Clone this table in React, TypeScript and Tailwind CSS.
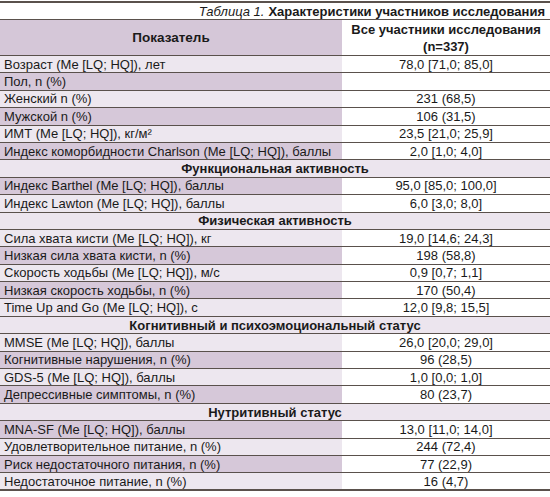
const rows: Array<[string, string] | string> = [
  ["Возраст (Me [LQ; HQ]), лет", "78,0 [71,0; 85,0]"],
  ["Пол, n (%)", ""],
  ["Женский n (%)", "231 (68,5)"],
  ["Мужской n (%)", "106 (31,5)"],
  ["ИМТ (Me [LQ; HQ]), кг/м²", "23,5 [21,0; 25,9]"],
  ["Индекс коморбидности Charlson (Me [LQ; HQ]), баллы", "2,0 [1,0; 4,0]"],
  "Функциональная активность",
  ["Индекс Barthel (Me [LQ; HQ]), баллы", "95,0 [85,0; 100,0]"],
  ["Индекс Lawton (Me [LQ; HQ]), баллы", "6,0 [3,0; 8,0]"],
  "Физическая активность",
  ["Сила хвата кисти (Me [LQ; HQ]), кг", "19,0 [14,6; 24,3]"],
  ["Низкая сила хвата кисти, n (%)", "198 (58,8)"],
  ["Скорость ходьбы (Me [LQ; HQ]), м/с", "0,9 [0,7; 1,1]"],
  ["Низкая скорость ходьбы, n (%)", "170 (50,4)"],
  ["Time Up and Go (Me [LQ; HQ]), с", "12,0 [9,8; 15,5]"],
  "Когнитивный и психоэмоциональный статус",
  ["MMSE (Me [LQ; HQ]), баллы", "26,0 [20,0; 29,0]"],
  ["Когнитивные нарушения, n (%)", "96 (28,5)"],
  ["GDS-5 (Me [LQ; HQ]), баллы", "1,0 [0,0; 1,0]"],
  ["Депрессивные симптомы, n (%)", "80 (23,7)"],
  "Нутритивный статус",
  ["MNA-SF (Me [LQ; HQ]), баллы", "13,0 [11,0; 14,0]"],
  ["Удовлетворительное питание, n (%)", "244 (72,4)"],
  ["Риск недостаточного питания, n (%)", "77 (22,9)"],
  ["Недостаточное питание, n (%)", "16 (4,7)"],
];

export default function App() {
  return (
    <div className="w-[550px] h-[497px] bg-white text-[13px] text-[#1a1a1a] font-['Liberation_Sans',Arial,sans-serif] leading-none">
      <div className="h-[2px] mt-[1px] bg-[#5a514c]" />
      <div className="h-[16px] flex items-center justify-end pr-[5px] text-[13px]">
        <span className="italic">Таблица 1.</span>
        <span className="font-bold ml-[4px]">Характеристики участников исследования</span>
      </div>
      <div className="border-t border-b border-[#5a514c] flex h-[37px]">
        <div className="w-[342px] bg-[#d5c7d8] flex items-center justify-center font-bold text-[13.5px]">Показатель</div>
        <div className="flex-1 flex flex-col items-center justify-center font-bold leading-[17px]">
          <span>Все участники исследования</span>
          <span>(n=337)</span>
        </div>
      </div>
      {rows.map((r, i) => {
        if (typeof r === "string") {
          return (
            <div key={i} className="h-[17.4px] border-b border-[#5a514c] bg-[#ece5ee] flex items-center justify-center font-bold">
              {r}
            </div>
          );
        }
        // stripes follow the overall row number, section rows included
        const dark = i % 2 === 1;
        const last = i === rows.length - 1;
        return (
          <div key={i} className={`h-[17.4px] border-[#5a514c] flex ${last ? "border-b-2" : "border-b"}`}>
            <div className={`w-[342px] pl-[4px] flex items-center ${dark ? "bg-[#d6c8d9]" : "bg-[#ede7ef]"}`}>{r[0]}</div>
            <div className="flex-1 flex items-center justify-center">{r[1]}</div>
          </div>
        );
      })}
    </div>
  );
}
